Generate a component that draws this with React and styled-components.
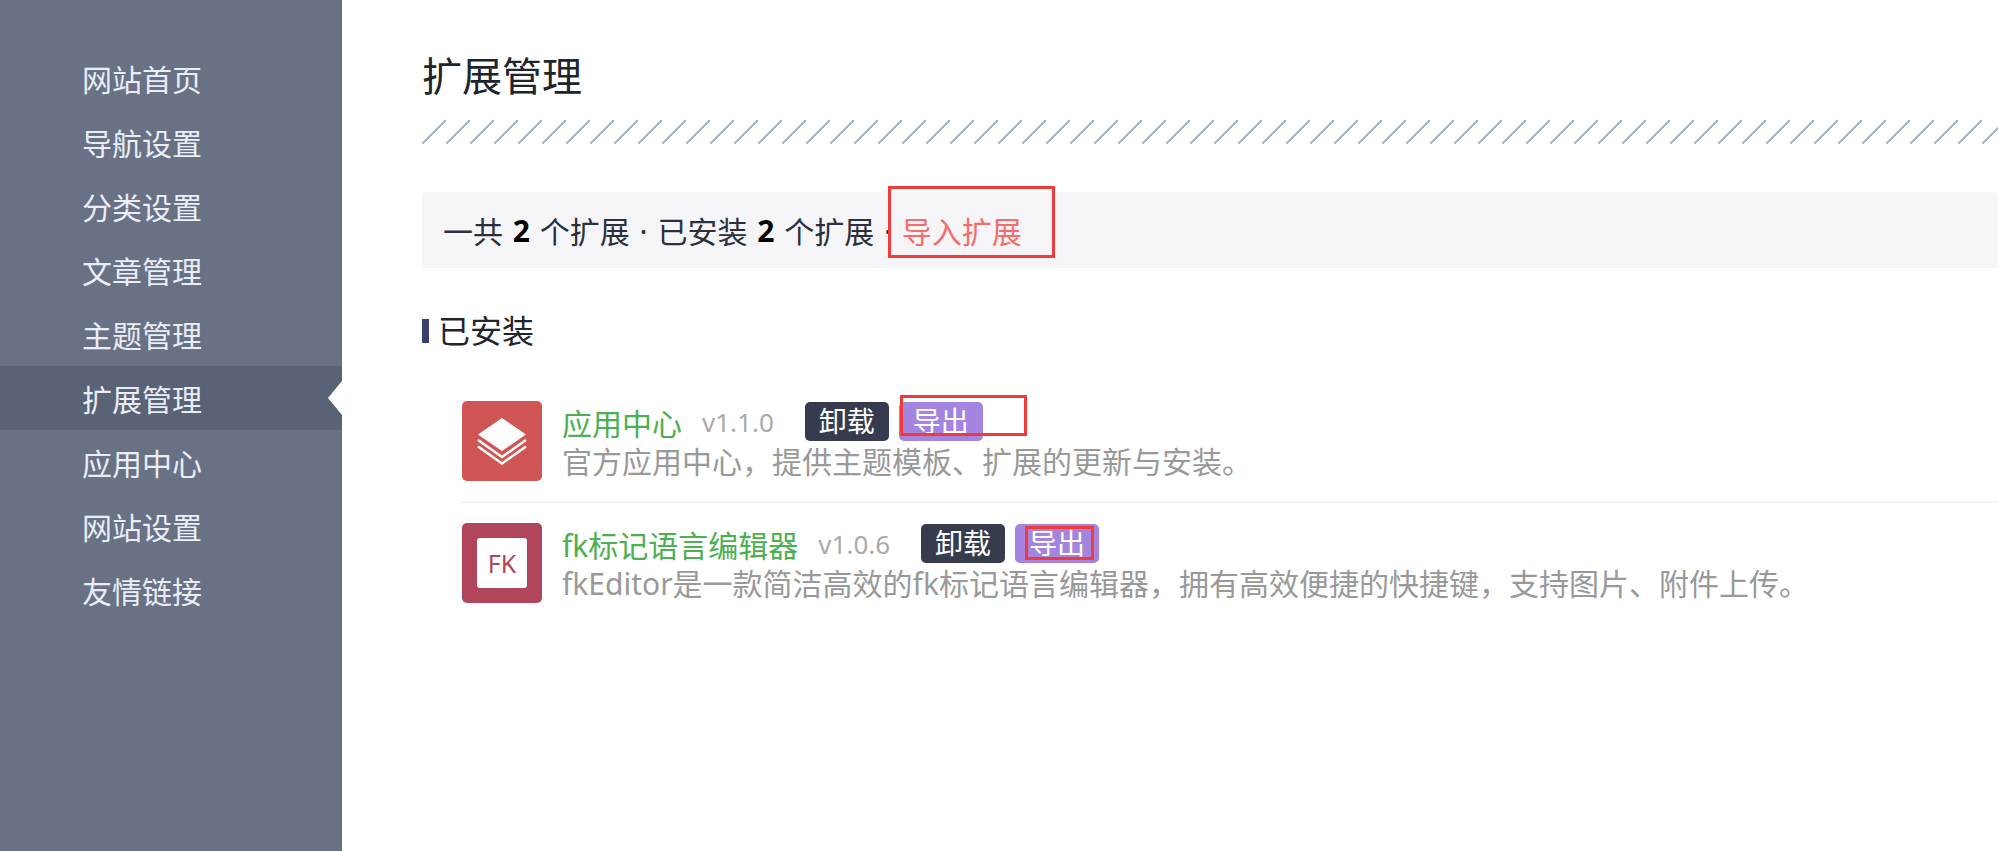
import React from "react";
import styled, { createGlobalStyle } from "styled-components";

const GlobalStyle = createGlobalStyle`
  html, body {
    margin: 0;
    padding: 0;
    height: 100%;
    background: #fff;
    overflow: hidden;
  }
  body {
    font-family: "Noto Sans", "Noto Sans CJK SC", sans-serif;
    color: #2b303b;
  }
`;

const Page = styled.div`
  position: relative;
  display: flex;
  width: 1998px;
  height: 851px;
  overflow: hidden;
`;

const Sidebar = styled.nav`
  flex: 0 0 342px;
  padding-top: 46px;
  box-sizing: border-box;
  background: #697184;
`;

const MenuItem = styled.a`
  position: relative;
  display: block;
  height: 64px;
  padding-left: 82px;
  font-size: 30px;
  line-height: 67px;
  color: #e9edf5;
  background: ${(p) => (p.$active ? "#5a6275" : "transparent")};

  ${(p) =>
    p.$active &&
    `&::after {
      content: "";
      position: absolute;
      right: 0;
      top: 15px;
      border-style: solid;
      border-width: 17px 14px 17px 0;
      border-color: transparent #fff transparent transparent;
    }`}
`;

const Main = styled.main`
  flex: 1;
  min-width: 0;
  padding-left: 80px;
`;

const Title = styled.h1`
  margin: 0;
  padding-top: 50px;
  font-size: 40px;
  font-weight: 400;
  line-height: 52px;
  color: #20242c;
`;

const Stripes = styled.div`
  height: 24px;
  margin-top: 18px;
  background-image: linear-gradient(
    135deg,
    transparent 46.5%,
    #a9b7cc 46.5%,
    #a9b7cc 53.5%,
    transparent 53.5%
  );
  background-size: 24px 24px;
`;

const InfoBar = styled.div`
  display: flex;
  align-items: center;
  height: 76px;
  margin-top: 48px;
  padding-left: 21px;
  font-size: 30px;
  word-spacing: 2px;
  white-space: pre;
  background: #f5f5f8;
  border-radius: 4px;
`;

const Count = styled.b`
  font-weight: 700;
  color: #000;
`;

const ImportLink = styled.a`
  color: #f56c6c;
`;

const SectionTitle = styled.h2`
  display: flex;
  align-items: center;
  gap: 9px;
  margin: 47px 0 0;
  font-size: 32px;
  font-weight: 400;
  line-height: 32px;
  color: #20242c;

  &::before {
    content: "";
    width: 7px;
    height: 24px;
    background: #3a3f6e;
  }
`;

const ExtensionList = styled.div`
  margin: 54px 0 0 40px;
`;

const ExtensionRow = styled.div`
  display: flex;
  gap: 20px;
  height: 80px;
  padding-bottom: 20px;
  margin-bottom: 20px;
  border-bottom: ${(p) => (p.$last ? "none" : "2px solid #f3f3f3")};
`;

const IconTile = styled.div`
  display: flex;
  align-items: center;
  justify-content: center;
  flex: 0 0 80px;
  height: 80px;
  border-radius: 5px;
  background: ${(p) => p.$color};
`;

const FkBadge = styled.span`
  display: flex;
  align-items: center;
  justify-content: center;
  width: 50px;
  height: 50px;
  border-radius: 3px;
  font-size: 25px;
  color: #b0455c;
  background: #fff;
`;

const ExtensionBody = styled.div`
  min-width: 0;
`;

const NameLine = styled.div`
  display: flex;
  align-items: center;
  height: 39px;
  margin-top: 1px;
`;

const Name = styled.a`
  font-size: 30px;
  color: #4caf50;
`;

const Version = styled.span`
  flex: 0 0 71px;
  margin-left: 20px;
  font-size: 26px;
  color: #aaa;
  white-space: nowrap;
`;

const ActionButton = styled.button`
  width: 84px;
  height: 39px;
  margin-left: ${(p) => p.$gap}px;
  padding: 0;
  border: 0;
  border-radius: 5px;
  font-family: inherit;
  font-size: 28px;
  line-height: 39px;
  color: #fff;
  background: ${(p) => p.$color};
`;

const Description = styled.p`
  margin: 1px 0 0;
  font-size: 30px;
  line-height: 40px;
  color: #999;
  white-space: nowrap;
`;

// red boxes drawn on top of the screenshot
const Marker = styled.div`
  position: absolute;
  left: ${(p) => p.$x}px;
  top: ${(p) => p.$y}px;
  width: ${(p) => p.$w}px;
  height: ${(p) => p.$h}px;
  box-sizing: border-box;
  border: 3px solid #f33a3a;
`;

const menu = [
  "网站首页",
  "导航设置",
  "分类设置",
  "文章管理",
  "主题管理",
  "扩展管理",
  "应用中心",
  "网站设置",
  "友情链接",
];

const LayersIcon = () => (
  <svg width="80" height="80" viewBox="0 0 80 80">
    <path d="M40 17 L64 33.5 L40 50 L16 33.5 Z" fill="#fff" />
    <path d="M16 39 L40 56 L64 39" fill="none" stroke="#fff" strokeWidth="2.4" />
    <path d="M16 45.5 L40 62.5 L64 45.5" fill="none" stroke="#fff" strokeWidth="2.4" />
  </svg>
);

const extensions = [
  {
    name: "应用中心",
    version: "v1.1.0",
    desc: "官方应用中心，提供主题模板、扩展的更新与安装。",
    color: "#d05555",
    icon: <LayersIcon />,
  },
  {
    name: "fk标记语言编辑器",
    version: "v1.0.6",
    desc: "fkEditor是一款简洁高效的fk标记语言编辑器，拥有高效便捷的快捷键，支持图片、附件上传。",
    color: "#b0455c",
    icon: <FkBadge>FK</FkBadge>,
  },
];

export default function App() {
  return (
    <Page>
      <GlobalStyle />
      <Sidebar>
        {menu.map((item) => (
          <MenuItem key={item} $active={item === "扩展管理"}>
            {item}
          </MenuItem>
        ))}
      </Sidebar>
      <Main>
        <Title>扩展管理</Title>
        <Stripes />
        <InfoBar>
          一共 <Count>2</Count> 个扩展 · 已安装 <Count>2</Count> 个扩展 · <ImportLink>导入扩展</ImportLink>
        </InfoBar>
        <SectionTitle>已安装</SectionTitle>
        <ExtensionList>
          {extensions.map((ext, i) => (
            <ExtensionRow key={ext.name} $last={i === extensions.length - 1}>
              <IconTile $color={ext.color}>{ext.icon}</IconTile>
              <ExtensionBody>
                <NameLine>
                  <Name>{ext.name}</Name>
                  <Version>{ext.version}</Version>
                  <ActionButton $gap={31} $color="#363c4d">卸载</ActionButton>
                  <ActionButton $gap={10} $color="#a385e0">导出</ActionButton>
                </NameLine>
                <Description>{ext.desc}</Description>
              </ExtensionBody>
            </ExtensionRow>
          ))}
        </ExtensionList>
      </Main>
      <Marker $x={888} $y={186} $w={167} $h={72} />
      <Marker $x={900} $y={395} $w={127} $h={41} />
      <Marker $x={1025} $y={526} $w={69} $h={34} />
    </Page>
  );
}
